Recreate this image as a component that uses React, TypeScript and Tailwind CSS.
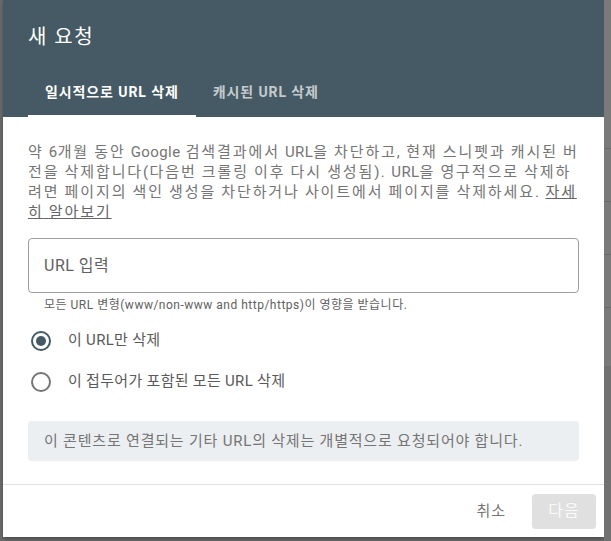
import { useState } from "react";

const tabs = ["일시적으로 URL 삭제", "캐시된 URL 삭제"];

const options = ["이 URL만 삭제", "이 접두어가 포함된 모든 URL 삭제"];

// Hangul in the original font runs wider than Noto's, latin a bit narrower
function Spaced({ text }: { text: string }) {
  return (
    <>
      {text.split(/([\uac00-\ud7a3]+|[A-Za-z0-9]+)/).map((part, i) =>
        /[\uac00-\ud7a3]/.test(part) ? (
          <span key={i} className="tracking-[1.9px]">{part}</span>
        ) : /[A-Za-z0-9]/.test(part) ? (
          <span key={i} className="tracking-[0.4px]">{part}</span>
        ) : (
          part
        )
      )}
    </>
  );
}

function Radio({ checked }: { checked: boolean }) {
  return (
    <span
      className={
        checked
          ? "w-[20px] h-[20px] rounded-full border-2 border-[#455a64] flex items-center justify-center shrink-0"
          : "w-[20px] h-[20px] rounded-full border-2 border-[#757575] flex items-center justify-center shrink-0"
      }
    >
      {checked && <span className="w-[10px] h-[10px] rounded-full bg-[#455a64]" />}
    </span>
  );
}

function BackdropStrip() {
  // dimmed page behind the dialog
  return (
    <div className="w-[7px] shrink-0 flex flex-col bg-[#7a7a7a]">
      <div className="h-[149px] border-b border-[#6a6a6a]" />
      <div className="h-[53px] border-b border-[#6a6a6a]" />
      <div className="h-[53px] border-b border-[#6a6a6a]" />
      <div className="h-[53px] border-b border-[#6a6a6a]" />
      <div className="h-[58px]" />
      <div className="flex-1 bg-[#717171]" />
    </div>
  );
}

export default function App() {
  const [tab, setTab] = useState(0);
  const [option, setOption] = useState(0);

  return (
    <div className="w-[611px] h-[541px] flex overflow-hidden bg-[#6b6b6b] font-['Roboto','Noto_Sans_CJK_KR',sans-serif]">
      <div className="w-[3px] shrink-0" />
      <div className="w-[601px] h-[537px] shrink-0 bg-white flex flex-col shadow-[0_2px_4px_rgba(0,0,0,0.3)]">
        <div className="h-[117px] bg-[#455a64] px-[25px] flex flex-col">
          <h2 className="pt-[23px] text-[20px] leading-[28px] tracking-[1.5px] text-white">새 요청</h2>
          <div className="mt-auto flex">
            {tabs.map((t, i) => (
              <button
                key={t}
                onClick={() => setTab(i)}
                className={
                  i === tab
                    ? "h-[48px] px-[17px] text-[14px] font-bold tracking-[0.9px] text-white border-b-2 border-white"
                    : "h-[48px] px-[17px] text-[14px] font-bold tracking-[0.9px] text-white/70 border-b-2 border-transparent"
                }
              >
                {t}
              </button>
            ))}
          </div>
        </div>

        <div className="flex-1 px-[25px] pt-[25px]">
          <p className="text-[15px] leading-[20px] tracking-[1.4px] text-[#757575]">
            <Spaced text="약 6개월 동안 Google 검색결과에서 URL을 차단하고, 현재 스니펫과 캐시된 버" />
            <br />
            <Spaced text="전을 삭제합니다(다음번 크롤링 이후 다시 생성됨). URL을 영구적으로 삭제하" />
            <br />
            <Spaced text="려면 페이지의 색인 생성을 차단하거나 사이트에서 페이지를 삭제하세요. " />
            <a className="underline text-[#666666]">
              <Spaced text="자세" />
              <br />
              <Spaced text="히 알아보기" />
            </a>
          </p>

          <div className="mt-[16px] h-[55px] border border-[#9e9e9e] rounded-[4px] flex items-center px-[15px]">
            <span className="text-[16px] tracking-[0.5px] text-[#616161]">URL 입력</span>
          </div>
          <div className="mt-[4px] pl-[16px] text-[12px] leading-[16px] tracking-[0.5px] text-[#616161]">
            모든 URL 변형(www/non-www and http/https)이 영향을 받습니다.
          </div>

          <div className="mt-[7px] flex flex-col">
            {options.map((o, i) => (
              <label
                key={o}
                onClick={() => setOption(i)}
                className="h-[41px] flex items-center gap-[17px] pl-[3px] cursor-pointer"
              >
                <Radio checked={option === i} />
                <span className="text-[15px] tracking-[0.3px] text-[#5a5a5a]">{o}</span>
              </label>
            ))}
          </div>

          <div className="mt-[19px] h-[40px] bg-[#eceff1] rounded-[4px] flex items-center px-[16px] text-[15px] tracking-[0.8px] text-[#757575]">
            이 콘텐츠로 연결되는 기타 URL의 삭제는 개별적으로 요청되어야 합니다.
          </div>
        </div>

        <div className="h-[53px] border-t border-[#e0e0e0] flex items-center justify-end gap-[26px] pr-[8px]">
          <button className="text-[15px] tracking-[1px] text-[#757575]">취소</button>
          <button className="w-[64px] h-[35px] rounded-[4px] bg-[#e0e0e0] text-[16px] tracking-[1px] text-[#fafafa]">다음</button>
        </div>
      </div>
      <BackdropStrip />
    </div>
  );
}
